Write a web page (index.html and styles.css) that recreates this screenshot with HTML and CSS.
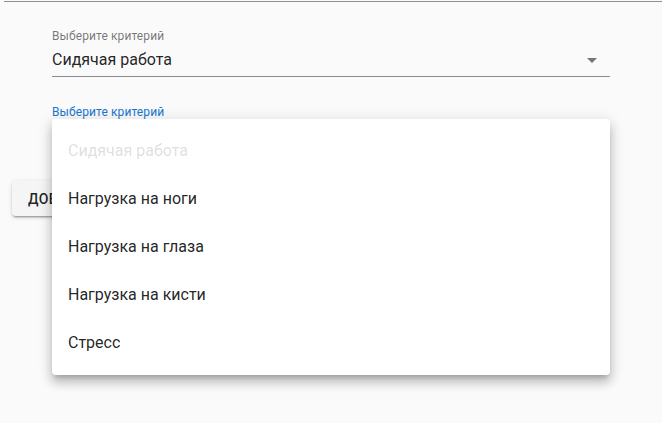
FILE: index.html
```html
<!DOCTYPE html>
<html lang="ru">
<head>
<meta charset="utf-8">
<link rel="stylesheet" href="styles.css">
</head>
<body>
<div class="topline"></div>
<div class="content">
  <div class="field">
    <label class="field-label">Выберите критерий</label>
    <div class="select">
      <span class="select-value">Сидячая работа</span>
      <svg class="arrow" width="10" height="5" viewBox="0 0 10 5"><path d="M0 0h10L5 5z" fill="#757575"/></svg>
    </div>
  </div>
  <div class="field field-focused">
    <label class="field-label">Выберите критерий</label>
    <div class="select select-hidden">
      <span class="select-value">&nbsp;</span>
    </div>
  </div>
  <div class="actions">
    <button class="btn">Добавить</button>
  </div>
</div>
<ul class="menu">
  <li class="menu-item disabled">Сидячая работа</li>
  <li class="menu-item">Нагрузка на ноги</li>
  <li class="menu-item">Нагрузка на глаза</li>
  <li class="menu-item">Нагрузка на кисти</li>
  <li class="menu-item">Стресс</li>
</ul>
</body>
</html>
```

FILE: styles.css
```css
html, body {
  margin: 0;
  padding: 0;
  background: #fafafa;
  font-family: Roboto, "Liberation Sans", sans-serif;
  color: rgba(0,0,0,0.87);
  height: 100%;
  overflow: hidden;
}
.topline {
  margin: 1px 0 0 4px;
  height: 1px;
  background: #8f8f8f;
}
.content {
  padding: 27px 0 0 0;
}
.field {
  margin-left: 52px;
  width: 558px;
  display: flex;
  flex-direction: column;
}
.field + .field {
  margin-top: 28px;
}
.field-label {
  font-size: 12px;
  line-height: 14px;
  height: 16px;
  color: rgba(0,0,0,0.54);
  letter-spacing: 0.1px;
}
.field-focused .field-label {
  color: #1976d2;
}
.select {
  display: flex;
  align-items: center;
  height: 32px;
  box-sizing: border-box;
  border-bottom: 1px solid #8c8c8c;
  padding: 0 13px 0 0;
}
.select-hidden {
  border-bottom-color: transparent;
}
.select-value {
  flex: 1;
  font-size: 16px;
  line-height: 19px;
  padding-bottom: 2px;
}
.arrow {
  display: block;
}
.actions {
  margin: 28px 0 0 12px;
}
.btn {
  font-family: Roboto, "Liberation Sans", sans-serif;
  font-size: 14px;
  font-weight: 500;
  text-transform: uppercase;
  letter-spacing: 0.4px;
  color: rgba(0,0,0,0.87);
  background: #f5f5f5;
  border: 0;
  border-radius: 4px;
  height: 35px;
  padding: 0 16px;
  box-shadow: 0 3px 1px -2px rgba(0,0,0,0.2), 0 2px 2px 0 rgba(0,0,0,0.14), 0 1px 5px 0 rgba(0,0,0,0.12);
}
.menu {
  position: absolute;
  left: 52px;
  top: 119px;
  width: 558px;
  margin: 0;
  padding: 8px 0;
  list-style: none;
  background: #fff;
  border-radius: 4px;
  box-shadow: 0 5px 5px -3px rgba(0,0,0,0.2), 0 8px 10px 1px rgba(0,0,0,0.14), 0 3px 14px 2px rgba(0,0,0,0.12);
}
.menu-item {
  height: 48px;
  display: flex;
  align-items: center;
  padding: 0 16px;
  font-size: 16px;
  line-height: 24px;
  color: rgba(0,0,0,0.87);
}
.menu-item.disabled {
  color: rgba(0,0,0,0.15);
}
```
